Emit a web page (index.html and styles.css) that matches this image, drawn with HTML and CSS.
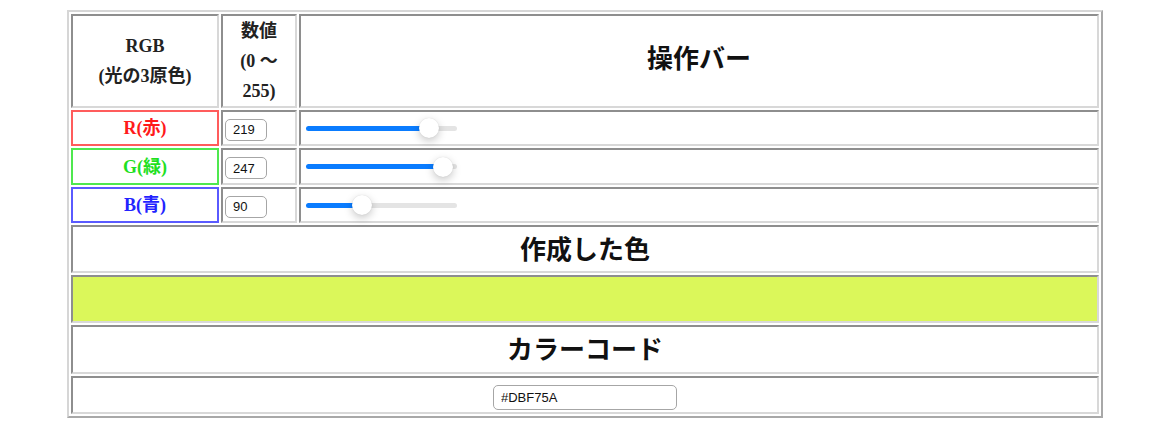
FILE: index.html
```html
<!DOCTYPE html>
<html lang="ja">
<head>
<meta charset="utf-8">
<title>RGB</title>
<link rel="stylesheet" href="styles.css">
</head>
<body>
<table class="rgb-table">
  <tr class="row-head">
    <th class="col-label">RGB<br>(光の3原色)</th>
    <th class="col-num">数値<br>(0 ～<br>255)</th>
    <th class="col-bar"><span class="big">操作バー</span></th>
  </tr>
  <tr class="row-r">
    <th class="label label-r">R(赤)</th>
    <td class="num"><input class="num-input" type="text" value="219"></td>
    <td class="bar"><input class="slider" type="range" min="0" max="255" value="219" style="--p: 81.5%"></td>
  </tr>
  <tr class="row-g">
    <th class="label label-g">G(緑)</th>
    <td class="num"><input class="num-input" type="text" value="247"></td>
    <td class="bar"><input class="slider" type="range" min="0" max="255" value="247" style="--p: 91.5%"></td>
  </tr>
  <tr class="row-b">
    <th class="label label-b">B(青)</th>
    <td class="num"><input class="num-input" type="text" value="90"></td>
    <td class="bar"><input class="slider" type="range" min="0" max="255" value="90" style="--p: 37.2%"></td>
  </tr>
  <tr class="row-title">
    <th colspan="3" class="title-cell"><span class="big">作成した色</span></th>
  </tr>
  <tr class="row-color">
    <td colspan="3" class="swatch" style="background-color: #DBF75A"></td>
  </tr>
  <tr class="row-title row-title2">
    <th colspan="3" class="title-cell"><span class="big">カラーコード</span></th>
  </tr>
  <tr class="row-code">
    <td colspan="3" class="code"><input class="code-input" type="text" value="#DBF75A"></td>
  </tr>
</table>
</body>
</html>
```

FILE: styles.css
```css
html, body {
  margin: 0;
  padding: 0;
  background: #ffffff;
}

body {
  padding-top: 10px;
  font-family: "Liberation Serif", "Noto Sans CJK JP", serif;
  color: #222222;
}

.rgb-table {
  margin: 0 auto;
  width: 1036px;
  table-layout: fixed;
  border-collapse: separate;
  border-spacing: 2px;
  border: 2px solid;
  border-color: #d6d6d6 #a8a8a8 #a8a8a8 #d6d6d6;
}

.rgb-table th,
.rgb-table td {
  box-sizing: border-box;
  border: 2px solid;
  border-color: #8e8e8e #d8d8d8 #d8d8d8 #8e8e8e;
  padding: 0;
  text-align: center;
  vertical-align: middle;
}

.rgb-table th {
  font-weight: bold;
  font-size: 18px;
  line-height: 30px;
}

.col-label { width: 148px; }
.col-num { width: 76px; }

.row-head { height: 94px; }
.row-r { height: 36px; }
.row-g { height: 37px; }
.row-b { height: 36px; }
.row-title { height: 48px; }
.row-title2 { height: 49px; }
.row-color { height: 48px; }
.row-code { height: 38px; }

.rgb-table .title-cell {
  padding-top: 5px;
}

.big {
  font-size: 26px;
  line-height: 30px;
  color: #111111;
}

.rgb-table .label {
  font-size: 18px;
  line-height: 20px;
  border-width: 2px;
  border-style: solid;
}

.rgb-table .label-r {
  color: #ff1a1a;
  border-color: #ff5c5c;
}

.rgb-table .label-g {
  color: #1fe01f;
  border-color: #4fe84f;
}

.rgb-table .label-b {
  color: #2323ff;
  border-color: #5a5aff;
}

.rgb-table .num {
  text-align: left;
  padding-left: 2px;
  padding-top: 3px;
}

.num-input {
  box-sizing: border-box;
  width: 42px;
  height: 22px;
  margin: 0;
  padding: 0 0 0 7px;
  border: 1px solid #a6a6a6;
  border-radius: 5px;
  font-family: "Liberation Sans", Arial, sans-serif;
  font-size: 13px;
  color: #111111;
  background: #ffffff;
  outline: none;
  vertical-align: middle;
}

.rgb-table .bar {
  text-align: left;
  padding-left: 5px;
}

.slider {
  -webkit-appearance: none;
  appearance: none;
  display: block;
  width: 151px;
  height: 22px;
  margin: 0;
  padding: 0;
  background: transparent;
  outline: none;
}

.slider::-webkit-slider-runnable-track {
  height: 5px;
  border-radius: 3px;
  background: linear-gradient(to right, #0a7cff 0, #0a7cff var(--p), #e4e4e4 var(--p), #e4e4e4 100%);
}

.slider::-webkit-slider-thumb {
  -webkit-appearance: none;
  appearance: none;
  width: 20px;
  height: 20px;
  margin-top: -7.5px;
  border-radius: 50%;
  background: #ffffff;
  box-shadow: 0 3px 8px rgba(0, 0, 0, 0.22), 0 0 1px rgba(0, 0, 0, 0.15);
}

.rgb-table .code {
  padding-top: 4px;
}

.code-input {
  box-sizing: border-box;
  width: 184px;
  height: 25px;
  margin: 0;
  padding: 0 0 0 7px;
  border: 1px solid #a6a6a6;
  border-radius: 5px;
  font-family: "Liberation Sans", Arial, sans-serif;
  font-size: 13px;
  color: #111111;
  background: #ffffff;
  outline: none;
  vertical-align: middle;
}
```
